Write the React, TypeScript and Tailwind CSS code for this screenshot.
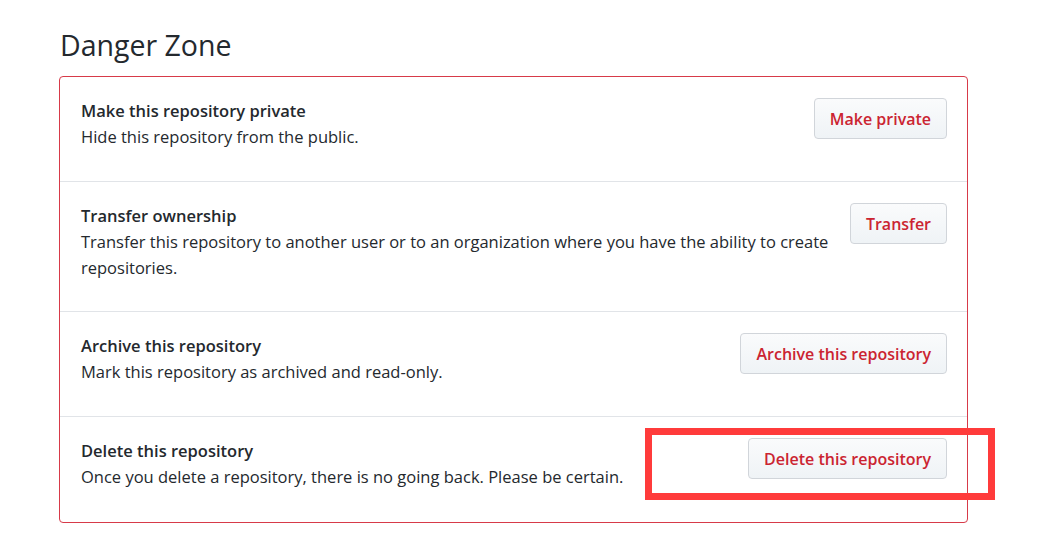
const ROWS = [
  {
    title: "Make this repository private",
    desc: "Hide this repository from the public.",
    button: "Make private",
  },
  {
    title: "Transfer ownership",
    desc: "Transfer this repository to another user or to an organization where you have the ability to create repositories.",
    button: "Transfer",
  },
  {
    title: "Archive this repository",
    desc: "Mark this repository as archived and read-only.",
    button: "Archive this repository",
  },
  {
    title: "Delete this repository",
    desc: "Once you delete a repository, there is no going back. Please be certain.",
    button: "Delete this repository",
    highlight: true,
  },
];

export default function App() {
  return (
    <div
      className="w-[1047px] h-[540px] bg-white text-[#24292e] pl-[59px] pt-[26px]"
      style={{ fontFamily: '"Segoe UI", "Open Sans", "Noto Sans", sans-serif' }}
    >
      <h2 className="text-[28.5px] leading-[38px] font-normal mb-[12px] pl-px">Danger Zone</h2>
      <div className="w-[909px] border border-[#d73a49] rounded-[4px]">
        {ROWS.map((row, i) => (
          <div
            key={row.title}
            className={`relative flex items-start justify-between gap-[10px] pl-[21px] pr-[20px] pt-[21px] ${
              i > 0 ? "border-t border-[#e1e4e8]" : ""
            } ${i === 1 ? "pb-[30px]" : i === 3 ? "pb-[32px]" : "pb-[31px]"}`}
          >
            <div className="flex-1 text-[16.5px] leading-[26px]">
              <div className="font-semibold">{row.title}</div>
              <p>{row.desc}</p>
            </div>
            <button className="shrink-0 h-[41px] px-[15px] text-[16px] font-semibold text-[#cb2431] border border-[#d1d5da] rounded-[4px] bg-gradient-to-b from-[#fafbfc] to-[#eff3f6]">
              {row.button}
            </button>
            {row.highlight && (
              <div className="absolute left-[585px] top-[11px] w-[350px] h-[72px] border-[7px] border-[#ff3b3b]" />
            )}
          </div>
        ))}
      </div>
    </div>
  );
}
